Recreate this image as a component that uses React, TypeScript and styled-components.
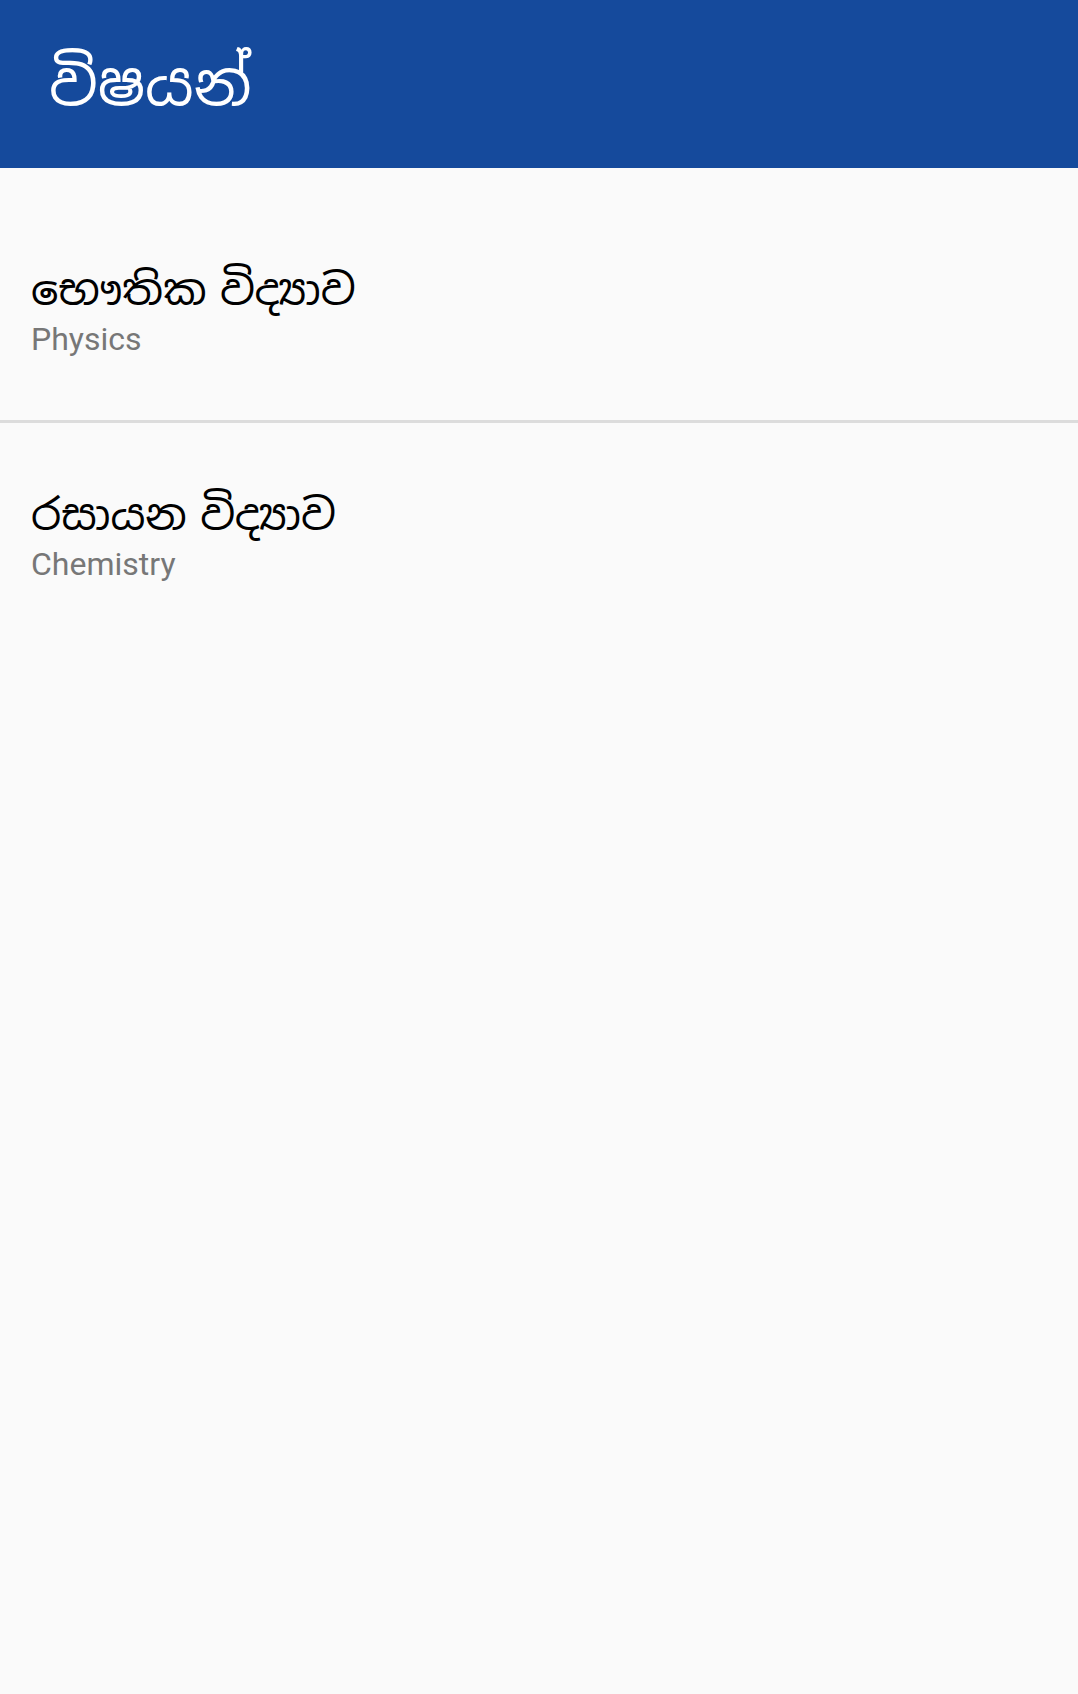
import React from "react";
import styled, { createGlobalStyle } from "styled-components";

const Global = createGlobalStyle`
  html, body { margin: 0; padding: 0; background: #fafafa; }
  body { font-family: Roboto, "Noto Sans", sans-serif; }
`;

const Page = styled.div`
  min-height: 1694px;
  background: #fafafa;
  display: flex;
  flex-direction: column;
`;

const AppBar = styled.header`
  height: 168px;
  background: #154a9c;
  display: flex;
  align-items: center;
  padding: 0 49px;
  box-sizing: border-box;
`;

const Title = styled.h1`
  margin: 0;
  color: #ffffff;
  font-family: "Noto Sans Sinhala", "Noto Sans", sans-serif;
  font-weight: 400;
  font-size: 60px;
  line-height: 1;
`;

const List = styled.div`
  display: flex;
  flex-direction: column;
  padding-top: 30px;
`;

const Item = styled.div`
  display: flex;
  flex-direction: column;
  padding: 66px 31px 62px;
  gap: 4px;
`;

const Divider = styled.div`
  height: 3px;
  background: #dcdcdc;
`;

const Primary = styled.div`
  font-family: "Noto Sans Sinhala", "Noto Sans", sans-serif;
  color: #000;
  font-size: 43px;
  line-height: 52px;
  word-spacing: -8px;
`;

const Secondary = styled.div`
  font-family: Roboto, sans-serif;
  color: #777777;
  font-size: 32px;
  line-height: 38px;
`;

const subjects = [
  { si: "භෞතික විද්‍යාව", en: "Physics" },
  { si: "රසායන විද්‍යාව", en: "Chemistry" },
];

export default function App() {
  return (
    <Page>
      <Global />
      <AppBar>
        <Title>විෂයන්</Title>
      </AppBar>
      <List>
        {subjects.map((s, i) => (
          <React.Fragment key={s.en}>
            {i > 0 && <Divider />}
            <Item>
              <Primary>{s.si}</Primary>
              <Secondary>{s.en}</Secondary>
            </Item>
          </React.Fragment>
        ))}
      </List>
    </Page>
  );
}
